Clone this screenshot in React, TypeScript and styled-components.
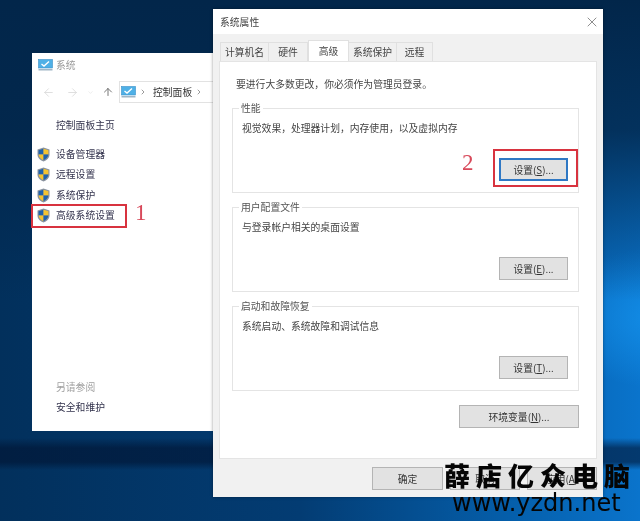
import React from 'react';
import styled, { createGlobalStyle } from 'styled-components';
import { ArrowLeft, ArrowRight, ArrowUp, ChevronDown, ChevronRight, X } from 'lucide-react';

const GlobalStyle = createGlobalStyle`
  html, body {
    margin: 0;
    padding: 0;
    background: #03294f;
  }
`;

const Desktop = styled.div`
  position: relative;
  width: 640px;
  height: 521px;
  overflow: hidden;
  font-family: "Noto Sans CJK SC", "Liberation Sans", sans-serif;
  font-size: 9.8px;
  color: #333;
  filter: blur(0.35px);
  background:
    linear-gradient(180deg, transparent 438px, rgba(0, 18, 48, 0.6) 448px, rgba(0, 18, 48, 0.6) 462px, transparent 470px),
    radial-gradient(ellipse 110px 70px at 660px 318px, rgba(20, 145, 235, 0.85), transparent),
    linear-gradient(90deg, #02305c 0, #033c73 300px, #0560ad 520px, #0a74cc 640px);
  &::before {
    content: '';
    position: absolute;
    inset: 0;
    background: linear-gradient(180deg, #02264a 0, rgba(2, 38, 74, 0.85) 130px, rgba(2, 38, 74, 0) 300px);
  }
`;

const SystemWindow = styled.div`
  position: absolute;
  left: 32px;
  top: 53px;
  width: 181px;
  height: 378px;
  background: #fff;
  display: flex;
  flex-direction: column;
`;

const WindowTitle = styled.div`
  display: flex;
  align-items: center;
  gap: 3px;
  height: 24px;
  padding-left: 6px;
  color: #999;
`;

const NavBar = styled.div`
  display: flex;
  align-items: center;
  height: 22px;
  margin-top: 4px;
  padding-left: 9.5px;
`;

const NavButton = styled.span<{ $dark?: boolean; $gap?: number }>`
  display: flex;
  margin-right: ${p => p.$gap ?? 0}px;
  color: ${p => (p.$dark ? '#666' : '#d8d8d8')};
`;

const AddressBox = styled.div`
  flex: 1;
  height: 20px;
  margin-left: 5px;
  display: flex;
  align-items: center;
  border: 1px solid #e2e2e2;
  border-right: none;
  padding-left: 1px;
  color: #333;
`;

const Sep = styled.span`
  display: flex;
  margin: 0 6px 0 3px;
  color: #666;
`;

const SideNav = styled.nav`
  flex: 1;
  display: flex;
  flex-direction: column;
  padding-left: 24px;
  padding-top: 12px;
  color: #33334d;
`;

const HomeLink = styled.div`
  height: 20px;
  line-height: 20px;
  margin-bottom: 9px;
`;

const ShieldLink = styled.div`
  position: relative;
  height: 20.4px;
  line-height: 20.4px;
`;

const ShieldSlot = styled.span`
  position: absolute;
  left: -19px;
  top: 3px;
  display: flex;
`;

const SeeAlso = styled.div`
  margin-top: auto;
  height: 20px;
  line-height: 20px;
  color: #a0a0a0;
`;

const BottomLink = styled.div`
  height: 20px;
  line-height: 20px;
  margin-bottom: 14px;
`;

const Dialog = styled.div`
  position: absolute;
  left: 213px;
  top: 9px;
  width: 390px;
  height: 488px;
  background: #f1f1f1;
  box-shadow: 0 0 3px rgba(0, 0, 0, 0.4);
  display: flex;
  flex-direction: column;
`;

const DialogTitle = styled.div`
  height: 25px;
  flex: none;
  background: #fff;
  display: flex;
  align-items: center;
  justify-content: space-between;
  padding: 0 3px 0 7px;
  color: #444;
`;

const CloseButton = styled.span`
  display: flex;
  color: #555;
`;

const TabStrip = styled.div`
  display: flex;
  align-items: flex-end;
  height: 27px;
  flex: none;
  padding-left: 7px;
`;

const Tab = styled.div<{ $active?: boolean; $w: number }>`
  width: ${p => p.$w}px;
  height: ${p => (p.$active ? 21 : 19)}px;
  box-sizing: border-box;
  display: flex;
  align-items: center;
  justify-content: center;
  background: ${p => (p.$active ? '#fff' : '#f0f0f0')};
  border: 1px solid #e0e0e0;
  border-bottom: none;
  border-left-width: ${p => (p.$active ? 1 : 0)}px;
  color: #444;
  &:first-child {
    border-left-width: 1px;
  }
`;

const TabPanel = styled.div`
  margin: 0 6px;
  height: 398px;
  flex: none;
  box-sizing: border-box;
  background: #fff;
  border: 1px solid #e4e4e4;
  padding: 13px 17px 0 12px;
  display: flex;
  flex-direction: column;
`;

const Notice = styled.div`
  height: 18px;
  line-height: 18px;
  padding-left: 4px;
  margin-bottom: 15px;
  color: #444;
`;

const GroupBox = styled.section`
  position: relative;
  height: 85px;
  box-sizing: border-box;
  border: 1px solid #e4e4e4;
  margin-bottom: 14px;
  padding: 11px 10px 11px 9px;
  display: flex;
  flex-direction: column;
  justify-content: space-between;
  align-items: flex-start;
`;

const GroupLegend = styled.span`
  position: absolute;
  left: 6px;
  top: -8px;
  padding: 0 2px;
  line-height: 14px;
  background: #fff;
  color: #555;
`;

const GroupText = styled.div`
  line-height: 16px;
  color: #444;
`;

const PushButton = styled.button<{ $w?: number; $focus?: boolean }>`
  flex: none;
  width: ${p => p.$w ?? 69}px;
  height: 23px;
  box-sizing: border-box;
  padding: 0;
  font: inherit;
  color: #333;
  background: #e2e2e2;
  border: ${p => (p.$focus ? '2px solid #2f78c4' : '1px solid #b4b4b4')};
  u {
    text-decoration-thickness: 1px;
  }
`;

const ButtonEnd = styled.div`
  align-self: flex-end;
  display: flex;
`;

const Footer = styled.div`
  flex: 1;
  display: flex;
  justify-content: flex-end;
  gap: 7px;
  padding: 8px 6px 0 0;
`;

const RedFrame = styled.div<{ $x: number; $y: number; $w: number; $h: number }>`
  position: absolute;
  left: ${p => p.$x}px;
  top: ${p => p.$y}px;
  width: ${p => p.$w}px;
  height: ${p => p.$h}px;
  box-sizing: border-box;
  border: 2px solid #d8333f;
`;

const Numeral = styled.span<{ $x: number; $y: number }>`
  position: absolute;
  left: ${p => p.$x}px;
  top: ${p => p.$y}px;
  font-family: "Liberation Serif", serif;
  font-size: 23px;
  line-height: 23px;
  color: #d8495a;
`;

const Watermark = styled.div`
  position: absolute;
  left: 444px;
  top: 458px;
  width: 196px;
  color: #050505;
`;

const WatermarkBrand = styled.div`
  font-size: 26px;
  font-weight: 900;
  line-height: 34px;
  letter-spacing: 6px;
  white-space: nowrap;
`;

const WatermarkUrl = styled.div`
  font-family: "DejaVu Sans", sans-serif;
  font-size: 24px;
  line-height: 22px;
  padding-left: 8px;
  white-space: nowrap;
`;

const Shield = () => (
  <svg width="13" height="15" viewBox="0 0 13 15">
    <path d="M6.5 0.5 L12.5 2.5 V7.5 C12.5 11 9.5 13.5 6.5 14.5 C3.5 13.5 0.5 11 0.5 7.5 V2.5 Z" fill="#8a93a0" />
    <path d="M6.5 1.8 V7.5 H1.6 V3.3 Z" fill="#1f62ab" />
    <path d="M6.5 1.8 L11.4 3.3 V7.5 H6.5 Z" fill="#f4c430" />
    <path d="M1.6 7.5 H6.5 V13.2 C4 12.2 2 10.2 1.6 7.5 Z" fill="#f4c430" />
    <path d="M6.5 7.5 H11.4 C11 10.2 9 12.2 6.5 13.2 Z" fill="#1f62ab" />
  </svg>
);

const MonitorIcon = () => (
  <svg width="15" height="12" viewBox="0 0 15 12">
    <rect x="0.5" y="0.5" width="14" height="8.5" fill="#4fb0e6" stroke="#3a8fc8" strokeWidth="0.6" />
    <path d="M3.5 5 L6 7 L11 2.5" fill="none" stroke="#fff" strokeWidth="1.4" />
    <rect x="0.5" y="10" width="14" height="1.5" fill="#9fb6c6" />
  </svg>
);

const App: React.FC = () => (
  <>
    <GlobalStyle />
    <Desktop>
      <SystemWindow>
        <WindowTitle>
          <MonitorIcon />
          系统
        </WindowTitle>
        <NavBar>
          <NavButton $gap={11}><ArrowLeft size={13} strokeWidth={1.5} /></NavButton>
          <NavButton $gap={8}><ArrowRight size={13} strokeWidth={1.5} /></NavButton>
          <NavButton $gap={8.5}><ChevronDown size={7} strokeWidth={1.5} /></NavButton>
          <NavButton $dark><ArrowUp size={12} strokeWidth={1.8} /></NavButton>
          <AddressBox>
            <MonitorIcon />
            <Sep><ChevronRight size={8} strokeWidth={2} /></Sep>
            控制面板
            <Sep><ChevronRight size={8} strokeWidth={2} /></Sep>
          </AddressBox>
        </NavBar>
        <SideNav>
          <HomeLink>控制面板主页</HomeLink>
          <ShieldLink><ShieldSlot><Shield /></ShieldSlot>设备管理器</ShieldLink>
          <ShieldLink><ShieldSlot><Shield /></ShieldSlot>远程设置</ShieldLink>
          <ShieldLink><ShieldSlot><Shield /></ShieldSlot>系统保护</ShieldLink>
          <ShieldLink><ShieldSlot><Shield /></ShieldSlot>高级系统设置</ShieldLink>
          <SeeAlso>另请参阅</SeeAlso>
          <BottomLink>安全和维护</BottomLink>
        </SideNav>
      </SystemWindow>

      <Dialog>
        <DialogTitle>
          系统属性
          <CloseButton><X size={16} strokeWidth={1} /></CloseButton>
        </DialogTitle>
        <TabStrip>
          <Tab $w={49}>计算机名</Tab>
          <Tab $w={39}>硬件</Tab>
          <Tab $w={41} $active>高级</Tab>
          <Tab $w={48}>系统保护</Tab>
          <Tab $w={36}>远程</Tab>
        </TabStrip>
        <TabPanel>
          <Notice>要进行大多数更改，你必须作为管理员登录。</Notice>
          <GroupBox>
            <GroupLegend>性能</GroupLegend>
            <GroupText>视觉效果，处理器计划，内存使用，以及虚拟内存</GroupText>
            <ButtonEnd><PushButton $focus>设置(<u>S</u>)...</PushButton></ButtonEnd>
          </GroupBox>
          <GroupBox>
            <GroupLegend>用户配置文件</GroupLegend>
            <GroupText>与登录帐户相关的桌面设置</GroupText>
            <ButtonEnd><PushButton>设置(<u>E</u>)...</PushButton></ButtonEnd>
          </GroupBox>
          <GroupBox>
            <GroupLegend>启动和故障恢复</GroupLegend>
            <GroupText>系统启动、系统故障和调试信息</GroupText>
            <ButtonEnd><PushButton>设置(<u>T</u>)...</PushButton></ButtonEnd>
          </GroupBox>
          <ButtonEnd><PushButton $w={120}>环境变量(<u>N</u>)...</PushButton></ButtonEnd>
        </TabPanel>
        <Footer>
          <PushButton $w={71}>确定</PushButton>
          <PushButton $w={70}>取消</PushButton>
          <PushButton $w={70}>应用(<u>A</u>)</PushButton>
        </Footer>
      </Dialog>

      <RedFrame $x={31} $y={204} $w={96} $h={24} />
      <Numeral $x={135} $y={201}>1</Numeral>
      <RedFrame $x={493} $y={149} $w={85} $h={38} />
      <Numeral $x={462} $y={151}>2</Numeral>

      <Watermark>
        <WatermarkBrand>薛店亿众电脑</WatermarkBrand>
        <WatermarkUrl>www.yzdn.net</WatermarkUrl>
      </Watermark>
    </Desktop>
  </>
);

export default App;
